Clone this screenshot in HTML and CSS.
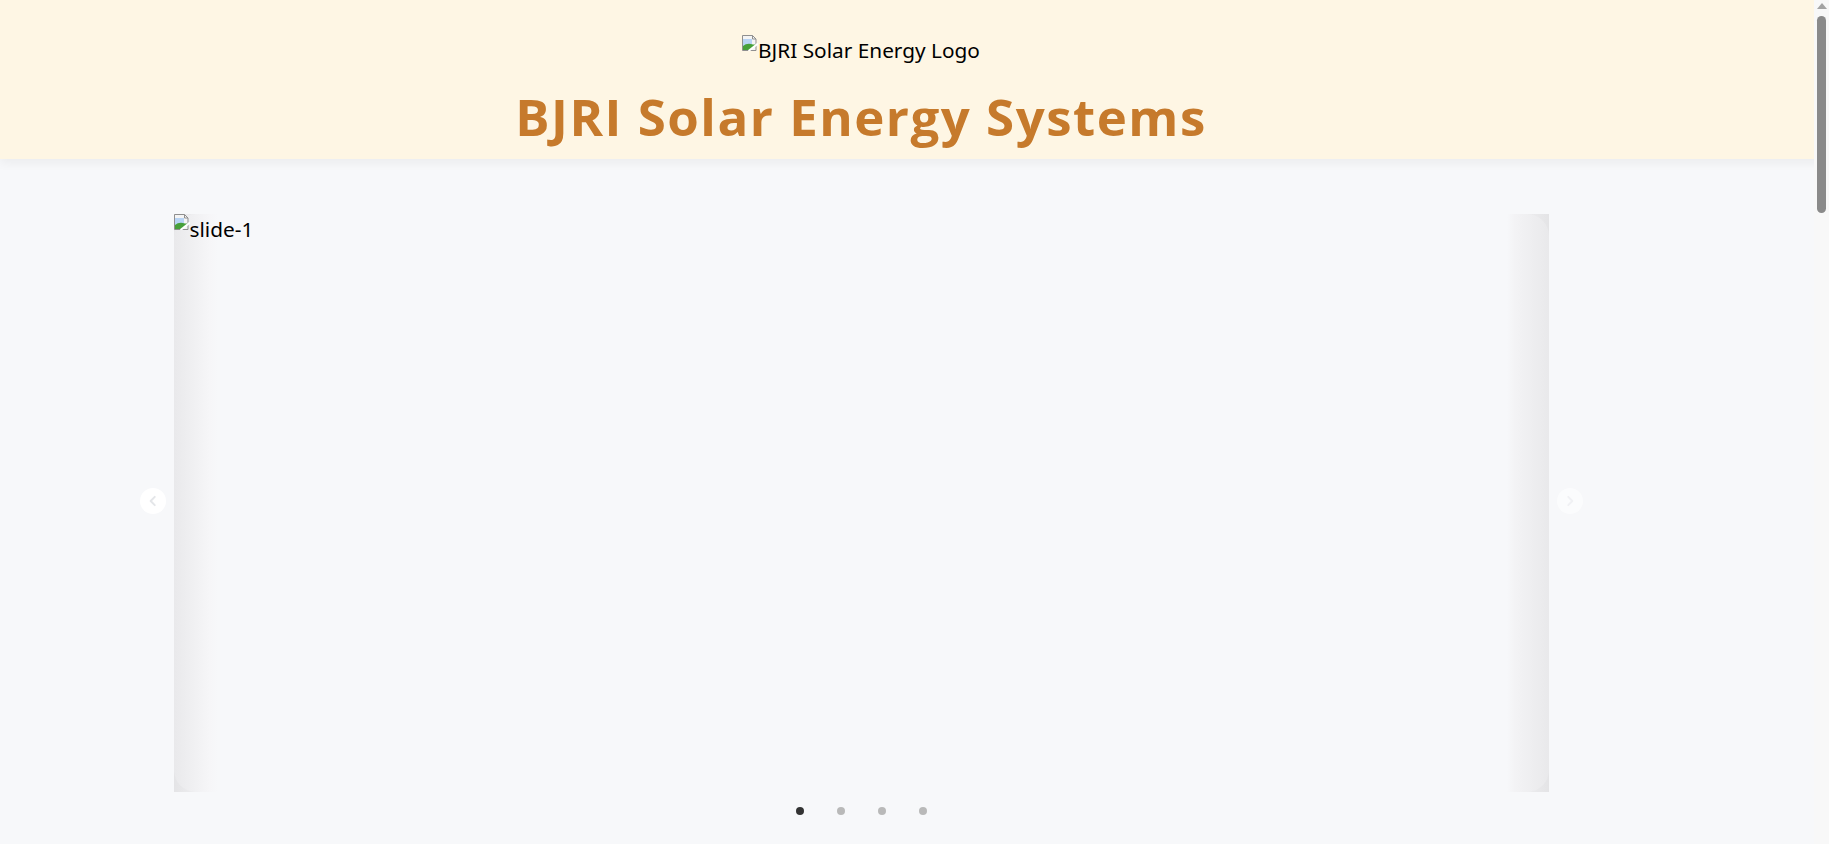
FILE: index.html
```html
<!DOCTYPE html>
<html lang="en">
<head>
<meta charset="utf-8">
<title>BJRI Solar Energy Systems</title>
<link rel="stylesheet" href="styles.css">
</head>
<body>
<header class="site-header">
  <div class="page">
    <div class="logo">
      <svg class="broken" viewBox="0 0 16 16" width="16" height="16" aria-hidden="true">
        <path d="M0.5 0.5h10l3.5 3.5v11.5h-13.5z" fill="#f4f4f4" stroke="#8f8f8f" stroke-width="1"/>
        <path d="M10.5 0.5v3.5h3.5" fill="none" stroke="#8f8f8f" stroke-width="1"/>
        <path d="M1 4h9v7H1z" fill="#b8d4f4"/>
        <path d="M1 15 L1 11 Q5 7.5 11 9.5 L13.5 9.5 L13.5 11 L8 15z" fill="#47a03a"/>
        <path d="M6.5 16 L16 8.5" stroke="#ffffff" stroke-width="2"/>
      </svg>
      <span class="logo-alt">BJRI Solar Energy Logo</span>
    </div>
    <h1 class="title">BJRI Solar Energy Systems</h1>
  </div>
</header>
<main class="page">
  <section class="carousel">
    <button class="arrow prev" aria-label="Previous">
      <svg viewBox="0 0 24 24" width="14" height="14"><path d="M15 5 L8 12 L15 19" fill="none" stroke="#e4e6e9" stroke-width="3.4" stroke-linecap="round" stroke-linejoin="round"/></svg>
    </button>
    <div class="slider">
      <div class="slide">
        <div class="slide-alt">
          <svg class="broken" viewBox="0 0 16 16" width="16" height="16" aria-hidden="true">
            <path d="M0.5 0.5h10l3.5 3.5v11.5h-13.5z" fill="#f4f4f4" stroke="#8f8f8f" stroke-width="1"/>
            <path d="M10.5 0.5v3.5h3.5" fill="none" stroke="#8f8f8f" stroke-width="1"/>
            <path d="M1 4h9v7H1z" fill="#b8d4f4"/>
            <path d="M1 15 L1 11 Q5 7.5 11 9.5 L13.5 9.5 L13.5 11 L8 15z" fill="#47a03a"/>
            <path d="M6.5 16 L16 8.5" stroke="#ffffff" stroke-width="2"/>
          </svg>
          <span>slide-1</span>
        </div>
      </div>
    </div>
    <button class="arrow next" aria-label="Next">
      <svg viewBox="0 0 24 24" width="14" height="14"><path d="M9 5 L16 12 L9 19" fill="none" stroke="#eceef1" stroke-width="3.4" stroke-linecap="round" stroke-linejoin="round"/></svg>
    </button>
  </section>
  <div class="dots">
    <span class="dot active"></span>
    <span class="dot"></span>
    <span class="dot"></span>
    <span class="dot"></span>
  </div>
  <section class="more"></section>
</main>
<div class="scrollbar" aria-hidden="true">
  <span class="scroll-up"></span>
  <span class="scroll-thumb"></span>
</div>
</body>
</html>
```
FILE: styles.css
```css
html, body {
  margin: 0;
  padding: 0;
}
body {
  background: #f7f8fa;
  font-family: "Open Sans", "Noto Sans", "Liberation Sans", sans-serif;
  color: #000;
}
.page {
  width: 1722px;
  box-sizing: border-box;
}
.site-header {
  background: #fef6e4;
  height: 159px;
  box-shadow: 0 4px 10px rgba(0, 0, 0, 0.05);
  position: relative;
}
.site-header .page {
  display: flex;
  flex-direction: column;
  align-items: center;
  padding-top: 35px;
}
.logo {
  display: flex;
  align-items: flex-start;
  height: 26px;
}
.broken {
  flex: none;
  display: block;
}
.logo-alt {
  font-size: 20.8px;
  line-height: 20px;
  margin-top: 5px;
  font-family: "Noto Sans", "Open Sans", sans-serif;
}
.title {
  margin: 24px 0 0;
  font-size: 51px;
  line-height: 62px;
  font-weight: 700;
  color: #c67a2c;
  letter-spacing: 1.5px;
  font-family: "Open Sans", "Noto Sans", sans-serif;
}
main.page {
  padding-top: 55px;
  display: flex;
  flex-direction: column;
  align-items: center;
}
.carousel {
  display: flex;
  align-items: center;
  gap: 8px;
}
.arrow {
  width: 26px;
  height: 26px;
  border-radius: 50%;
  border: none;
  background: #ffffff;
  padding: 0;
  display: flex;
  align-items: center;
  justify-content: center;
  flex: none;
  margin-top: -4px;
}
.arrow.next {
  opacity: 0.6;
}
.slider {
  width: 1375px;
  height: 578px;
  background: linear-gradient(to right, #e4e4e6 0, #f3f3f5 34px, #f7f8fa 42px, #f7f8fa calc(100% - 40px), #f1f1f3 calc(100% - 32px), #e4e4e6 100%);
  position: relative;
}
.slide {
  height: 100%;
  border-radius: 22px;
  background: linear-gradient(to right, #e9e9eb 0, #f6f6f8 36px, #f7f8fa 44px, #f7f8fa calc(100% - 42px), #f3f3f5 calc(100% - 34px), #e9e9eb 100%);
  box-sizing: border-box;
}
.slide-alt {
  display: flex;
  align-items: flex-start;
  font-size: 20.8px;
  line-height: 20px;
  font-family: "Noto Sans", "Open Sans", sans-serif;
}
.slide-alt span {
  margin-top: 5px;
}
.dots {
  display: flex;
  gap: 33px;
  margin-top: 15px;
}
.dot {
  width: 8px;
  height: 8px;
  border-radius: 50%;
  background: #b9b9b9;
}
.dot.active {
  background: #333333;
}
.more {
  height: 2600px;
}
.scrollbar {
  position: fixed;
  top: 0;
  right: 0;
  width: 15px;
  height: 100vh;
  background: #f8f8f8;
  display: flex;
  flex-direction: column;
  align-items: center;
}
.scroll-up {
  width: 0;
  height: 0;
  margin-top: 3px;
  border-left: 5px solid transparent;
  border-right: 5px solid transparent;
  border-bottom: 6px solid #a3a3a3;
}
.scroll-thumb {
  margin-top: 7px;
  width: 9px;
  height: 197px;
  border-radius: 5px;
  background: #8a8a8a;
}
```
